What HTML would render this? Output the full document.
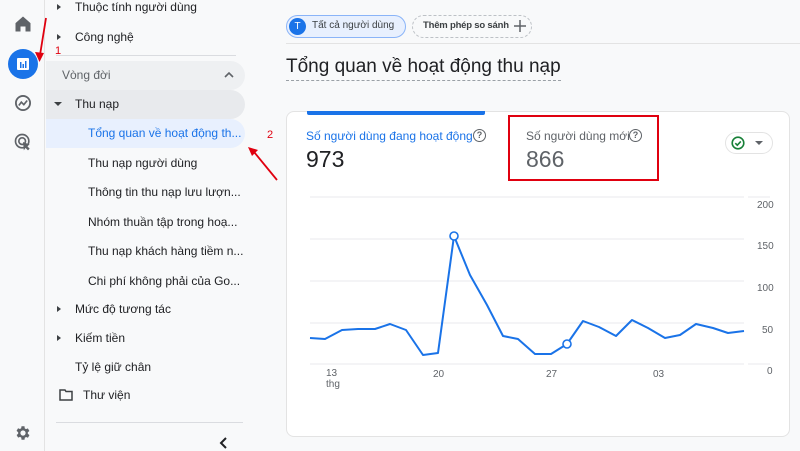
<!DOCTYPE html>
<html><head><meta charset="utf-8"><style>
*{margin:0;padding:0;box-sizing:border-box}
body{width:800px;height:451px;overflow:hidden;background:#f8f9fa;font-family:"Liberation Sans","Noto Sans CJK SC",sans-serif;position:relative;color:#202124}
.a{position:absolute}
.t{font-size:12px;white-space:nowrap;line-height:14px}
.tr{position:absolute;width:0;height:0;border-top:3.5px solid transparent;border-bottom:3.5px solid transparent;border-left:4px solid #3c4043}
.td{position:absolute;width:0;height:0;border-left:4px solid transparent;border-right:4px solid transparent;border-top:4px solid #3c4043}
</style></head><body>
<div class="a" style="left:0;top:0;width:45px;height:451px;background:#f8f9fa;border-right:1px solid #e3e3e3"></div>
<svg class="a" style="left:13px;top:14px" width="20" height="20" viewBox="0 0 24 24"><path d="M12 3L3 11v10h6v-6h6v6h6V11z" fill="#5f6368"/></svg>
<div class="a" style="left:8px;top:49px;width:30px;height:30px;border-radius:50%;background:#1a73e8"></div>
<svg class="a" style="left:15px;top:56px" width="16" height="16" viewBox="0 0 16 16"><rect x="2" y="2" width="12" height="12" rx="1" fill="#fff"/><rect x="5" y="6" width="1.5" height="6" fill="#1a73e8"/><rect x="7.5" y="8" width="1.5" height="4" fill="#1a73e8"/><rect x="10" y="5" width="1.5" height="7" fill="#1a73e8"/></svg>
<svg class="a" style="left:13px;top:93px" width="20" height="20" viewBox="0 0 24 24"><circle cx="12" cy="12" r="8.5" fill="none" stroke="#5f6368" stroke-width="2.2"/><path d="M7 15l3-4 3 3 4-5" fill="none" stroke="#5f6368" stroke-width="2"/></svg>
<svg class="a" style="left:13px;top:132px" width="20" height="20" viewBox="0 0 24 24"><circle cx="11" cy="11" r="8" fill="none" stroke="#5f6368" stroke-width="2"/><circle cx="11" cy="11" r="4" fill="none" stroke="#5f6368" stroke-width="2"/><path d="M12 12l8 3-3 2 3 3-2 2-3-3-2 3z" fill="#5f6368"/></svg>
<svg class="a" style="left:14px;top:424px" width="18" height="18" viewBox="0 0 24 24"><path d="M19.4 13a7.5 7.5 0 000-2l2.1-1.6-2-3.5-2.5 1a7 7 0 00-1.7-1L15 3h-4l-.4 2.7a7 7 0 00-1.7 1l-2.5-1-2 3.5L6.6 11a7.5 7.5 0 000 2l-2.1 1.6 2 3.5 2.5-1a7 7 0 001.7 1L11 21h4l.4-2.7a7 7 0 001.7-1l2.5 1 2-3.5zM13 15.5a3.5 3.5 0 110-7 3.5 3.5 0 010 7z" fill="#5f6368" transform="translate(-1 0)"/></svg>

<div class="a" style="left:46px;top:0;width:212px;height:451px;background:#f8f9fa"></div>
<div class="tr" style="left:57px;top:4px"></div><div class="a t" style="left:75px;top:0">Thuộc tính người dùng</div>
<div class="tr" style="left:57px;top:34px"></div><div class="a t" style="left:75px;top:30px">Công nghệ</div>
<div class="a" style="left:56px;top:55px;width:180px;height:1px;background:#dadce0"></div>
<div class="a" style="left:46px;top:61px;width:199px;height:29px;background:#eef0f2;border-radius:0 15px 15px 0"></div>
<div class="a t" style="left:62px;top:68px;color:#5f6368">Vòng đời</div>
<svg class="a" style="left:223px;top:70px" width="12" height="10" viewBox="0 0 12 10"><path d="M2 7l4-4 4 4" fill="none" stroke="#5f6368" stroke-width="1.6"/></svg>
<div class="a" style="left:46px;top:90px;width:199px;height:29px;background:#e8eaed;border-radius:0 15px 15px 0"></div>
<div class="td" style="left:54px;top:102px"></div><div class="a t" style="left:75px;top:97px">Thu nạp</div>
<div class="a" style="left:46px;top:119px;width:199px;height:29px;background:#e8f0fe;border-radius:0 15px 15px 0"></div>
<div class="a t" style="left:88px;top:126px;color:#1a73e8">Tổng quan về hoạt động th...</div>
<div class="a t" style="left:88px;top:156px">Thu nạp người dùng</div>
<div class="a t" style="left:88px;top:185px">Thông tin thu nạp lưu lượn...</div>
<div class="a t" style="left:88px;top:215px">Nhóm thuần tập trong hoạ...</div>
<div class="a t" style="left:88px;top:244px">Thu nạp khách hàng tiềm n...</div>
<div class="a t" style="left:88px;top:274px">Chi phí không phải của Go...</div>
<div class="tr" style="left:57px;top:306px"></div><div class="a t" style="left:75px;top:302px">Mức độ tương tác</div>
<div class="tr" style="left:57px;top:335px"></div><div class="a t" style="left:75px;top:331px">Kiếm tiền</div>
<div class="a t" style="left:75px;top:360px">Tỷ lệ giữ chân</div>
<svg class="a" style="left:59px;top:389px" width="14" height="12" viewBox="0 0 14 12"><path d="M1 1h5l1 1.5h6V11H1z" fill="none" stroke="#3c4043" stroke-width="1.5"/></svg>
<div class="a t" style="left:83px;top:388px">Thư viện</div>
<div class="a" style="left:56px;top:422px;width:187px;height:1px;background:#dadce0"></div>
<svg class="a" style="left:219px;top:437px" width="10" height="12" viewBox="0 0 10 12"><path d="M7 1L2 6l5 5" fill="none" stroke="#202124" stroke-width="2"/></svg>

<div class="a" style="left:286px;top:15px;width:120px;height:23px;border:1px solid #8ab4f8;background:#e8f0fe;border-radius:12px"></div>
<div class="a" style="left:289px;top:18px;width:17px;height:17px;border-radius:50%;background:#1a73e8;color:#fff;font-size:10px;text-align:center;line-height:17px">T</div>
<div class="a t" style="left:312px;top:20px;font-size:10px;line-height:12px;color:#3c4043">Tất cả người dùng</div>
<div class="a" style="left:412px;top:15px;width:120px;height:23px;border:1px dashed #bdc1c6;border-radius:12px"></div>
<div class="a t" style="left:423px;top:20px;font-size:9.5px;line-height:12px;font-weight:bold;color:#3c4043;letter-spacing:-0.2px">Thêm phép so sánh</div>
<svg class="a" style="left:513px;top:19px" width="14" height="14" viewBox="0 0 14 14"><path d="M7 1v12M1 7h12" stroke="#5f6368" stroke-width="1.5"/></svg>
<div class="a" style="left:286px;top:43px;width:514px;height:1px;background:#e3e3e3"></div>
<div class="a t" style="left:286px;top:56px;font-size:19px;line-height:22px;color:#202124;border-bottom:1px dashed #9aa0a6;padding-bottom:2px">Tổng quan về hoạt động thu nạp</div>

<div class="a" style="left:286px;top:111px;width:504px;height:326px;background:#fff;border:1px solid #e3e3e3;border-radius:8px"></div>
<div class="a" style="left:307px;top:111px;width:178px;height:4px;background:#1a73e8;border-radius:0 0 2px 2px"></div>
<div class="a t" style="left:306px;top:129px;color:#1a73e8">Số người dùng đang hoạt động</div>
<div class="a" style="left:473px;top:129px;width:13px;height:13px;border:1.5px solid #5f6368;border-radius:50%;font-size:9px;text-align:center;line-height:10px;color:#5f6368;font-weight:bold">?</div>
<div class="a t" style="left:306px;top:146px;font-size:23px;line-height:26px">973</div>
<div class="a t" style="left:526px;top:129px;color:#5f6368">Số người dùng mới</div>
<div class="a" style="left:629px;top:129px;width:13px;height:13px;border:1.5px solid #5f6368;border-radius:50%;font-size:9px;text-align:center;line-height:10px;color:#5f6368;font-weight:bold">?</div>
<div class="a t" style="left:526px;top:146px;font-size:23px;line-height:26px;color:#5f6368">866</div>
<div class="a" style="left:508px;top:115px;width:151px;height:66px;border:2px solid #e0000f"></div>
<div class="a" style="left:725px;top:132px;width:48px;height:22px;border:1px solid #e3e3e3;border-radius:11px"></div>
<svg class="a" style="left:731px;top:136px" width="14" height="14" viewBox="0 0 14 14"><circle cx="7" cy="7" r="5.8" fill="none" stroke="#188038" stroke-width="1.6"/><path d="M4.3 7.2l2 2 3.5-3.8" fill="none" stroke="#188038" stroke-width="1.6"/></svg>
<div class="td" style="left:755px;top:141px;border-top-color:#5f6368"></div>

<svg class="a" style="left:0;top:0" width="800" height="451">
<g stroke="#e8eaed" stroke-width="1">
<line x1="310" y1="197" x2="744" y2="197"/><line x1="310" y1="239" x2="744" y2="239"/><line x1="310" y1="281" x2="744" y2="281"/><line x1="310" y1="323" x2="744" y2="323"/><line x1="310" y1="364" x2="744" y2="364"/>
<line x1="748" y1="197" x2="770" y2="197"/><line x1="748" y1="364" x2="770" y2="364"/>
</g>
<polyline fill="none" stroke="#1a73e8" stroke-width="2" stroke-linejoin="round" points="310,338 325,339 342,330 358,329 375,329 390,324 406,330 423,355 438,353 454,236 470,275 487,305 503,336 518,339 535,354 551,354 567,344 583,321 599,327 616,336 632,320 648,328 665,338 680,335 696,324 713,328 728,333 744,331"/>
<circle cx="454" cy="236" r="4" fill="#fff" stroke="#1a73e8" stroke-width="1.6"/>
<circle cx="567" cy="344" r="4" fill="#fff" stroke="#1a73e8" stroke-width="1.6"/>
<g font-family="Liberation Sans,sans-serif" font-size="10" fill="#5f6368">
<text x="757" y="208">200</text><text x="757" y="249">150</text><text x="757" y="291">100</text><text x="762" y="333">50</text><text x="767" y="374">0</text>
<text x="326" y="376">13</text><text x="326" y="387">thg</text><text x="433" y="377">20</text><text x="546" y="377">27</text><text x="653" y="377">03</text>
</g>
<g stroke="#e0000f" stroke-width="1.8" fill="#e0000f">
<line x1="46" y1="18" x2="40" y2="55"/><path d="M35 52l4.5 10 4.5-9z" stroke="none"/>
<line x1="277" y1="180" x2="254" y2="152"/><path d="M248 147l10 3-6 6z" stroke="none"/>
</g>
<g font-family="Liberation Sans,sans-serif" font-size="11" fill="#e0000f"><text x="55" y="54">1</text><text x="267" y="138">2</text></g>
</svg>
</body></html>
